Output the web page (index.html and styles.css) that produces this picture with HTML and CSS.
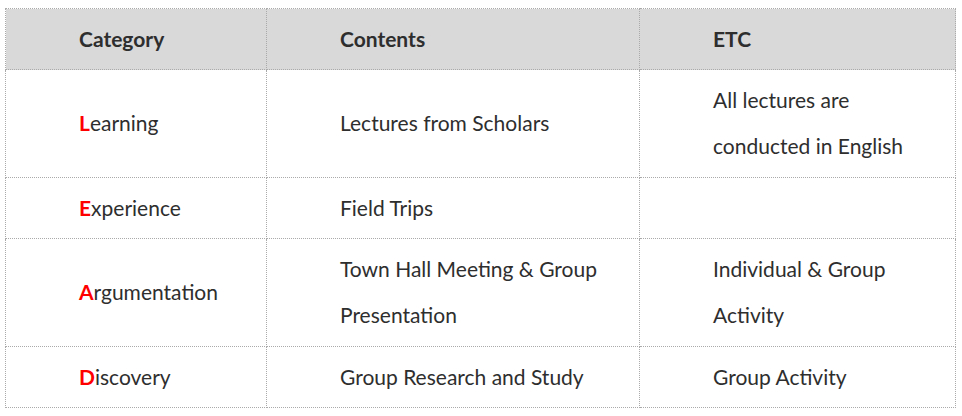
FILE: index.html
```html
<!DOCTYPE html>
<html lang="en">
<head>
<meta charset="utf-8">
<title>LEAD Program</title>
<link rel="stylesheet" href="styles.css">
</head>
<body>
<table class="program">
  <colgroup>
    <col class="col-cat">
    <col class="col-con">
    <col class="col-etc">
  </colgroup>
  <thead>
    <tr>
      <th>Category</th>
      <th>Contents</th>
      <th>ETC</th>
    </tr>
  </thead>
  <tbody>
    <tr>
      <td><span class="init">L</span>earning</td>
      <td>Lectures from Scholars</td>
      <td>All lectures are<br>conducted in English</td>
    </tr>
    <tr>
      <td><span class="init">E</span>xperience</td>
      <td>Field Trips</td>
      <td></td>
    </tr>
    <tr>
      <td><span class="init">A</span>rgumentation</td>
      <td>Town Hall Meeting &amp; Group<br>Presentation</td>
      <td>Individual &amp; Group<br>Activity</td>
    </tr>
    <tr>
      <td><span class="init">D</span>iscovery</td>
      <td>Group Research and Study</td>
      <td>Group Activity</td>
    </tr>
  </tbody>
</table>
</body>
</html>
```
FILE: styles.css
```css
html, body {
  background: #ffffff;
}
body {
  margin: 8px 6px 0 5px;
  font-family: Lato, "Open Sans", sans-serif;
  color: #2e2e2e;
}
.program {
  width: 950px;
  border-collapse: collapse;
  table-layout: fixed;
  font-size: 21px;
}
.col-cat { width: 261px; }
.col-con { width: 373px; }
.col-etc { width: 316px; }
.program th,
.program td {
  border: 1px dotted #aaaaaa;
  text-align: left;
  vertical-align: middle;
  padding: 7px 8px 7.5px 73px;
  line-height: 46px;
}
.program th {
  background: #d9d9d9;
  font-weight: bold;
  padding-top: 8px;
  padding-bottom: 8px;
  line-height: 44px;
}
.init {
  color: #ff0000;
  font-weight: bold;
}
```
